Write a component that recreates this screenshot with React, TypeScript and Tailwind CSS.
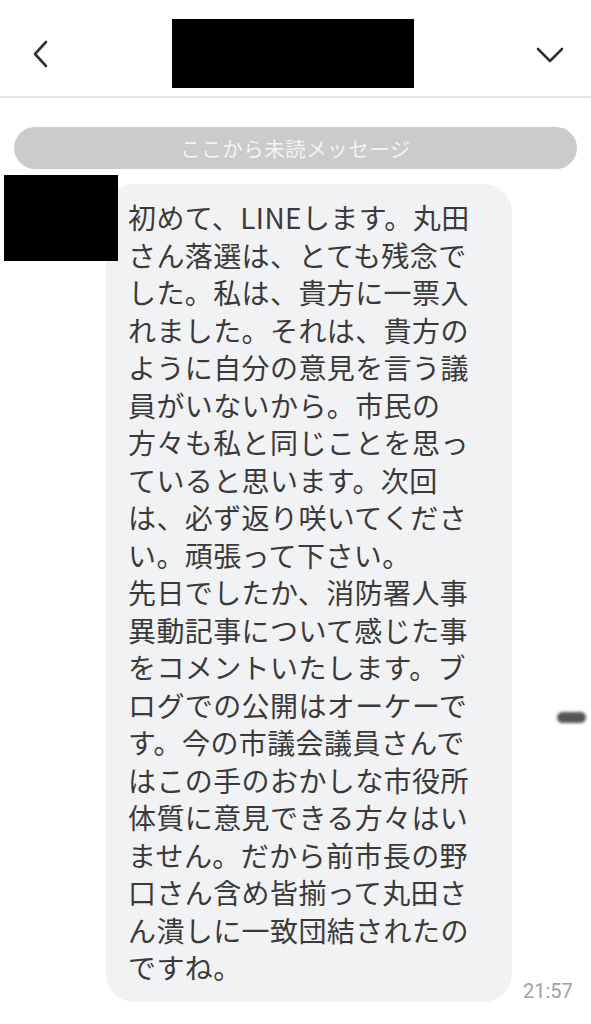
import React from 'react';

const lines = [
  '初めて、LINEします。丸田',
  'さん落選は、とても残念で',
  'した。私は、貴方に一票入',
  'れました。それは、貴方の',
  'ように自分の意見を言う議',
  '員がいないから。市民の',
  '方々も私と同じことを思っ',
  'ていると思います。次回',
  'は、必ず返り咲いてくださ',
  'い。頑張って下さい。',
  '先日でしたか、消防署人事',
  '異動記事について感じた事',
  'をコメントいたします。ブ',
  'ログでの公開はオーケーで',
  'す。今の市議会議員さんで',
  'はこの手のおかしな市役所',
  '体質に意見できる方々はい',
  'ません。だから前市長の野',
  '口さん含め皆揃って丸田さ',
  'ん潰しに一致団結されたの',
  'ですね。',
];

export default function App() {
  return (
    <div
      className="relative w-[591px] h-[1024px] bg-white overflow-hidden"
      style={{ fontFamily: '"Noto Sans CJK JP", "Noto Sans", Roboto, sans-serif' }}
    >
      {/* Header */}
      <div className="h-[98px] flex items-start justify-between border-b-2 border-[#e6e6e6]">
        <div className="w-[80px] flex justify-center pl-[1px] pt-[40px]">
          <svg width="20" height="28" viewBox="0 0 20 28" fill="none">
            <path d="M15 2 L4 14 L15 26" stroke="#333" strokeWidth="2.6" strokeLinecap="round" strokeLinejoin="round" />
          </svg>
        </div>
        <div className="w-[242px] h-[69px] bg-black mt-[19px] mr-[6px]" />
        <div className="w-[80px] flex justify-center pr-[3px] pt-[46px]">
          <svg width="28" height="18" viewBox="0 0 28 18" fill="none">
            <path d="M2 3 L14 15 L26 3" stroke="#333" strokeWidth="2.6" strokeLinecap="round" strokeLinejoin="round" />
          </svg>
        </div>
      </div>

      {/* Unread divider */}
      <div className="mt-[29px] mx-[14px] h-[42px] rounded-full bg-[#cbcbcb] flex items-center justify-center">
        <span className="text-[20.5px] text-[#f3f3f3] tracking-[0.5px]">ここから未読メッセージ</span>
      </div>

      {/* Message row */}
      <div className="relative flex items-end mt-[15px] pl-[106px]">
        <div className="absolute left-[4px] top-[-9px] w-[114px] h-[86px] bg-black z-10" />
        <div className="w-[406px] bg-[#f1f2f4] rounded-[28px] pl-[22px] pt-[15px] pb-[15px] text-[28px] leading-[37.5px] tracking-[0.4px] text-[#3a3a3a]">
          {lines.map((l, i) => (
            <div key={i} className="whitespace-nowrap">{l}</div>
          ))}
        </div>
        <div className="ml-[11px] mb-[0px] text-[20px] leading-[22px] text-[#a0a0a0]" style={{ fontFamily: 'Roboto, sans-serif' }}>
          21:57
        </div>
      </div>

      {/* smudge on screen */}
      <div className="absolute left-[557px] top-[712px] w-[29px] h-[11px] rounded-full bg-[#555] blur-[1.5px]" />
    </div>
  );
}
